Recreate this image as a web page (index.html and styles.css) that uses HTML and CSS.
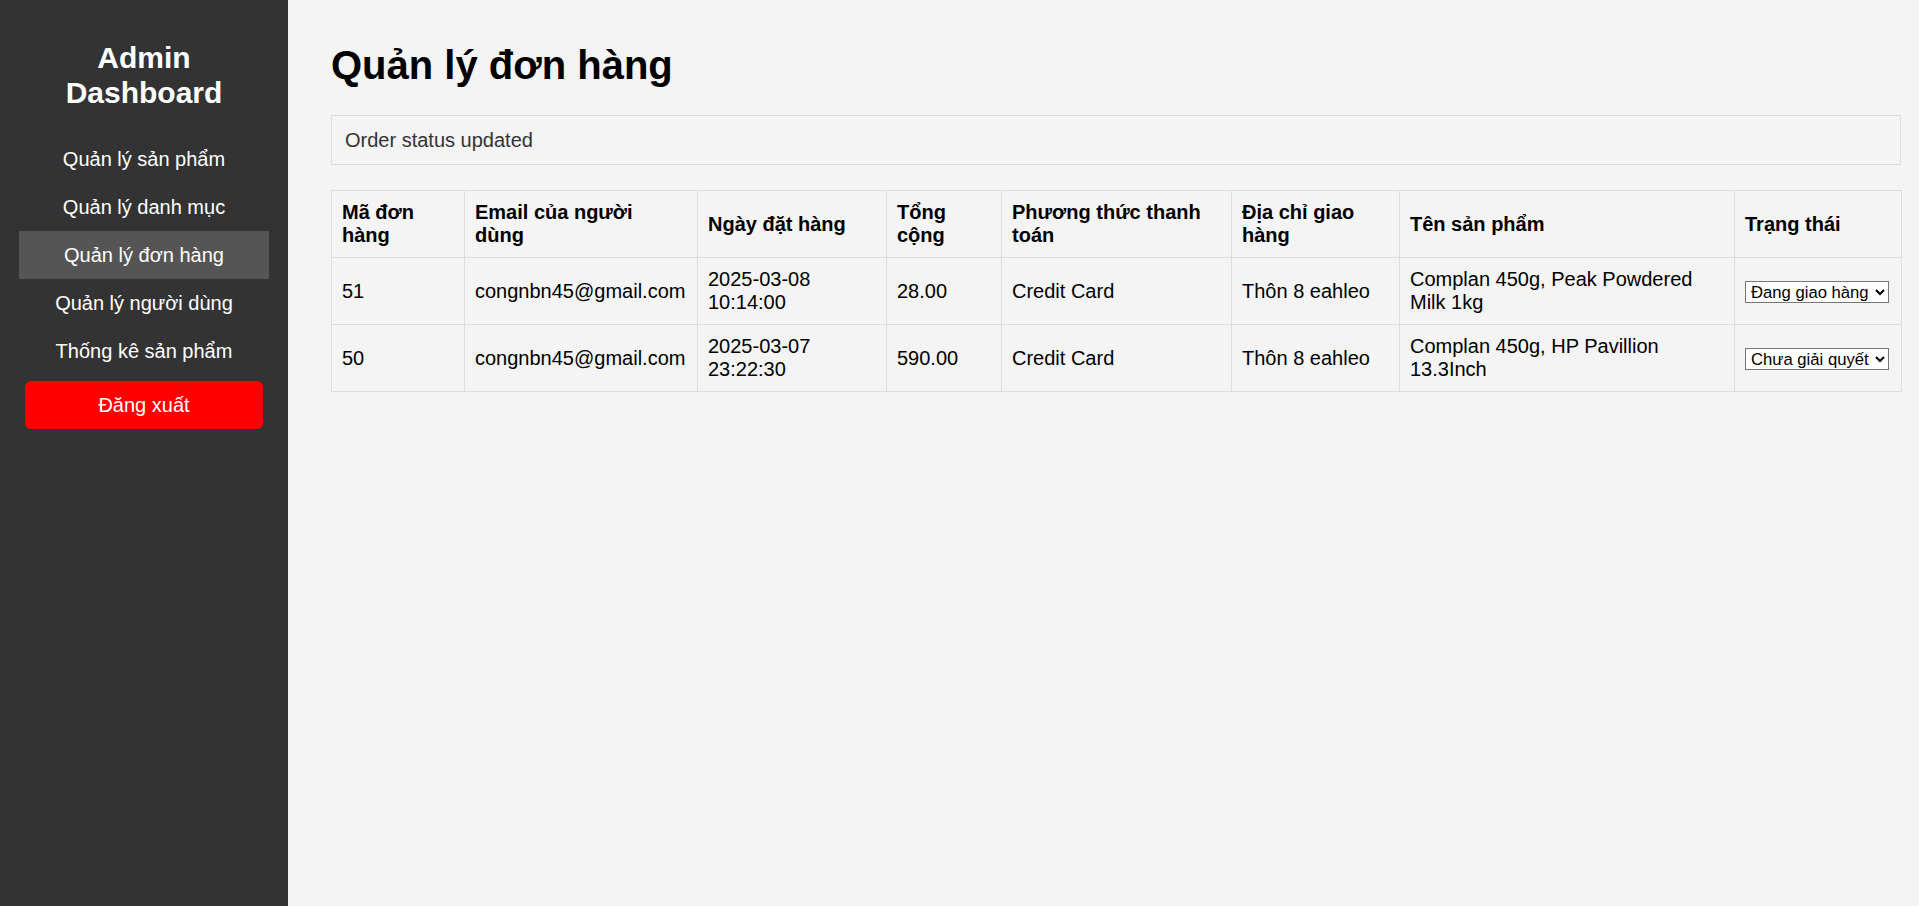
FILE: index.html
```html
<!DOCTYPE html>
<html lang="vi">
<head>
<meta charset="utf-8">
<title>Quản lý đơn hàng</title>
<link rel="stylesheet" href="styles.css">
</head>
<body>
<div class="layout">
  <aside class="sidebar">
    <h2 class="brand">Admin Dashboard</h2>
    <nav class="nav">
      <a class="nav-item" href="#">Quản lý sản phẩm</a>
      <a class="nav-item" href="#">Quản lý danh mục</a>
      <a class="nav-item active" href="#">Quản lý đơn hàng</a>
      <a class="nav-item" href="#">Quản lý người dùng</a>
      <a class="nav-item" href="#">Thống kê sản phẩm</a>
    </nav>
    <button class="logout" type="button">Đăng xuất</button>
  </aside>
  <main class="main">
    <h1 class="page-title">Quản lý đơn hàng</h1>
    <div class="message">Order status updated</div>
    <table class="orders">
      <colgroup>
        <col class="c-id"><col class="c-email"><col class="c-date"><col class="c-total">
        <col class="c-pay"><col class="c-addr"><col class="c-prod"><col class="c-status">
      </colgroup>
      <thead>
        <tr>
          <th>Mã đơn hàng</th>
          <th>Email của người dùng</th>
          <th>Ngày đặt hàng</th>
          <th>Tổng cộng</th>
          <th>Phương thức thanh toán</th>
          <th>Địa chỉ giao hàng</th>
          <th>Tên sản phẩm</th>
          <th>Trạng thái</th>
        </tr>
      </thead>
      <tbody>
        <tr>
          <td>51</td>
          <td>congnbn45@gmail.com</td>
          <td>2025-03-08 10:14:00</td>
          <td>28.00</td>
          <td>Credit Card</td>
          <td>Thôn 8 eahleo</td>
          <td>Complan 450g, Peak Powdered Milk 1kg</td>
          <td>
            <select class="status">
              <option>Chưa giải quyết</option>
              <option selected>Đang giao hàng</option>
              <option>Đã giao hàng</option>
              <option>Đã hủy</option>
            </select>
          </td>
        </tr>
        <tr>
          <td>50</td>
          <td>congnbn45@gmail.com</td>
          <td>2025-03-07 23:22:30</td>
          <td>590.00</td>
          <td>Credit Card</td>
          <td>Thôn 8 eahleo</td>
          <td>Complan 450g, HP Pavillion 13.3Inch</td>
          <td>
            <select class="status">
              <option selected>Chưa giải quyết</option>
              <option>Đang giao hàng</option>
              <option>Đã giao hàng</option>
              <option>Đã hủy</option>
            </select>
          </td>
        </tr>
      </tbody>
    </table>
  </main>
</div>
</body>
</html>
```

FILE: styles.css
```css
* { box-sizing: border-box; }

html, body {
  margin: 0;
  padding: 0;
  height: 100%;
}

body {
  background: #f4f4f4;
  font-family: "Liberation Sans", Arial, sans-serif;
  font-size: 20px;
  color: #000;
}

.layout {
  display: flex;
  min-height: 100vh;
}

.sidebar {
  width: 288px;
  flex: 0 0 288px;
  background: #333333;
  color: #fff;
  padding: 16px 19px;
  display: flex;
  flex-direction: column;
}

.brand {
  margin: 25px 0;
  font-size: 30px;
  font-weight: bold;
  text-align: center;
  line-height: 34.5px;
}

.nav {
  display: flex;
  flex-direction: column;
}

.nav-item {
  display: block;
  color: #fff;
  text-decoration: none;
  text-align: center;
  padding: 12.5px 0;
  line-height: 23px;
}

.nav-item.active {
  background: #555555;
}

.logout {
  display: block;
  width: 238px;
  margin: 6px auto 0;
  padding: 12.5px 0;
  border: none;
  border-radius: 6px;
  background: #ff0000;
  color: #fff;
  font-family: "Liberation Sans", Arial, sans-serif;
  font-size: 20px;
  line-height: 23px;
  cursor: pointer;
}

.main {
  flex: 1;
  padding: 42px 18px 0 43px;
  min-width: 0;
}

.page-title {
  margin: 0 0 27px;
  font-size: 40px;
  line-height: 46px;
  font-weight: bold;
}

.message {
  border: 1px solid #dddddd;
  padding: 13px 13px 12px;
  line-height: 23px;
  color: #333;
  margin-bottom: 25px;
}

.orders {
  width: 100%;
  border-collapse: collapse;
  table-layout: fixed;
}

.c-id { width: 133px; }
.c-email { width: 233px; }
.c-date { width: 189px; }
.c-total { width: 115px; }
.c-pay { width: 230px; }
.c-addr { width: 168px; }
.c-prod { width: 335px; }
.c-status { width: 167px; }

.orders th,
.orders td {
  border: 1px solid #dddddd;
  padding: 10px 10px;
  text-align: left;
  vertical-align: middle;
  line-height: 23px;
}

.orders th {
  font-weight: bold;
}

.status {
  font-family: "Liberation Sans", Arial, sans-serif;
  font-size: 16.67px;
  width: 144px;
  height: 22px;
  padding: 0 0 0 1px;
  border: 1px solid #767676;
  border-radius: 0;
  background: #fff;
  color: #000;
}
```
